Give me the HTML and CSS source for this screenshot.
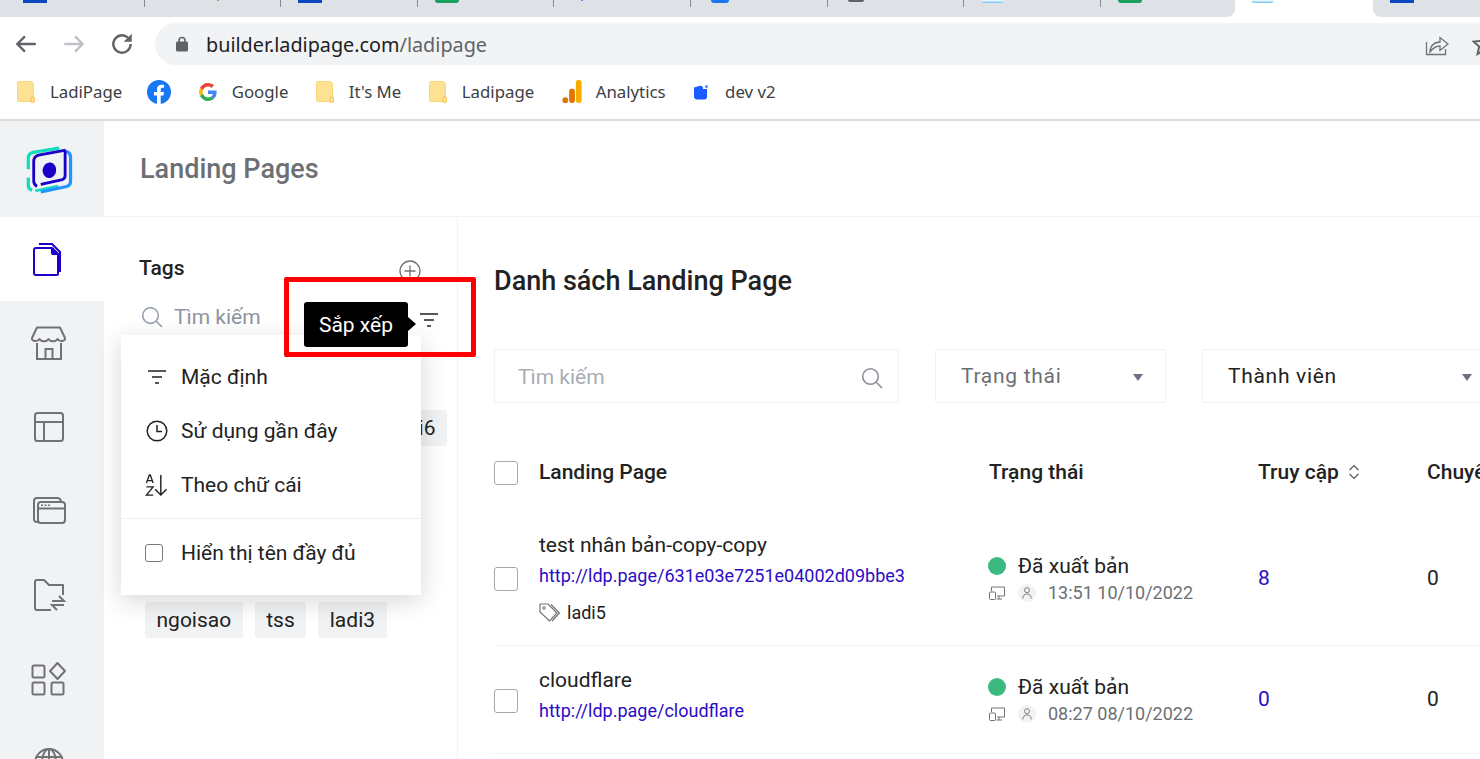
FILE: index.html
```html
<!DOCTYPE html>
<html lang="en">
<head>
    <meta charset="UTF-8">
    <meta name="viewport" content="width=device-width, initial-scale=1.0">
    <title>Landing Pages</title>
    <link rel="stylesheet" href="styles.css">
</head>
<body>
    <!-- Browser tabs, only the bottom of the favicons shows -->
    <div class="tabs">
        <div class="tab-group tab-group-left">
            <div class="tab"><span class="fav fav-blue"></span></div>
            <div class="tab"><span class="fav fav-bits"></span></div>
            <div class="tab"><span class="fav fav-blue"></span></div>
            <div class="tab"><span class="fav fav-green"></span></div>
            <div class="tab"><span class="fav fav-bits2"></span></div>
            <div class="tab"><span class="fav fav-fb"></span></div>
            <div class="tab"><span class="fav fav-grey"></span></div>
            <div class="tab"><span class="fav fav-light"></span></div>
            <div class="tab tab-last"><span class="fav fav-green"></span></div>
        </div>
        <div class="tab-active"><span class="fav fav-light"></span></div>
        <div class="tab-group tab-group-right">
            <div class="tab tab-last"><span class="fav fav-blue"></span></div>
        </div>
    </div>

    <!-- Browser toolbar -->
    <div class="toolbar">
        <svg class="nav-icon" viewBox="0 0 24 24"><path d="M21 12H4M11 5l-7 7 7 7" fill="none" stroke="#5f6368" stroke-width="2.2"/></svg>
        <svg class="nav-icon" viewBox="0 0 24 24"><path d="M3 12h17M13 5l7 7-7 7" fill="none" stroke="#bdc1c6" stroke-width="2.2"/></svg>
        <svg class="nav-icon" viewBox="0 0 24 24"><path d="M20 12a8 8 0 1 1-2.6-5.9" fill="none" stroke="#5f6368" stroke-width="2.2"/><path d="M21 2.5V10h-7.5z" fill="#5f6368"/></svg>
        <div class="omnibox">
            <svg class="lock" viewBox="0 0 12 16"><path d="M3 6V4.500a3 3 0 0 1 6 0V6" fill="none" stroke="#5f6368" stroke-width="1.600"/><rect y="5.500" width="12" height="10" rx="1.500" fill="#5f6368"/></svg>
            <span class="url">builder.ladipage.com<span class="url-path">/ladipage</span></span>
            <svg class="share" viewBox="0 0 24 24"><path d="M1.500 10v12.500h19V17" fill="none" stroke="#6f7276" stroke-width="1.300"/><path d="M5 20c0-6 4-10 10-10V5.500l8 6.500-8 6.500V14c-4 0-7 2-10 6z" fill="none" stroke="#6f7276" stroke-width="1.300"/></svg>
            <svg class="star" viewBox="0 0 24 24"><path d="M12 2l3 7 7.500.6-5.700 5 1.700 7.400L12 18l-6.500 4 1.700-7.400-5.700-5L9 9z" fill="none" stroke="#5f6368" stroke-width="2"/></svg>
        </div>
    </div>

    <!-- Bookmarks -->
    <div class="bookmarks">
        <div class="bookmark bookmark-first">
            <svg class="bm-folder" viewBox="0 0 18 22"><path d="M1.500.5h12a3 3 0 0 1 3 3v17h-15a1 1 0 0 1-1-1v-18a1 1 0 0 1 1-1z" fill="#fde293" stroke="#f8d775"/><rect x="14" y="16" width="3.500" height="5.500" rx="1" fill="#fde293" stroke="#f3c34f"/></svg>
            <span>LadiPage</span>
        </div>
        <div class="bookmark">
            <svg class="bm-icon" viewBox="0 0 24 24"><circle cx="12" cy="12" r="12" fill="#1877f2"/><path d="M10 24v-8.500H7V12h3V9.300C10 6.300 11.800 4.700 14.500 4.700c1.300 0 2.600.2 2.600.2v2.900h-1.500c-1.400 0-1.900.9-1.900 1.800V12h3.300l-.5 3.500h-2.800V24z" fill="#fff"/></svg>
        </div>
        <div class="bookmark">
            <svg class="bm-google" viewBox="0 0 48 48"><path fill="#ea4335" d="M24 9.500c3.500 0 6.700 1.300 9.100 3.500l6.800-6.800C35.800 2.400 30.300 0 24 0 14.600 0 6.500 5.400 2.600 13.200l7.900 6.200C12.400 13.700 17.700 9.500 24 9.500z"/><path fill="#4285f4" d="M47 24.500c0-1.600-.2-3.100-.4-4.500H24v9h12.900c-.6 3-2.300 5.500-4.800 7.200l7.700 6C44.300 38 47 31.800 47 24.500z"/><path fill="#fbbc05" d="M10.500 28.600c-.5-1.400-.8-3-.8-4.600s.3-3.200.8-4.600l-7.900-6.200C.9 16.500 0 20.100 0 24s.9 7.500 2.600 10.800z"/><path fill="#34a853" d="M24 48c6.500 0 11.900-2.100 15.900-5.800l-7.700-6c-2.200 1.400-4.900 2.300-8.200 2.300-6.300 0-11.600-4.200-13.500-10l-7.900 6.200C6.500 42.600 14.600 48 24 48z"/></svg>
            <span>Google</span>
        </div>
        <div class="bookmark">
            <svg class="bm-folder" viewBox="0 0 18 22"><path d="M1.500.5h12a3 3 0 0 1 3 3v17h-15a1 1 0 0 1-1-1v-18a1 1 0 0 1 1-1z" fill="#fde293" stroke="#f8d775"/><rect x="14" y="16" width="3.500" height="5.500" rx="1" fill="#fde293" stroke="#f3c34f"/></svg>
            <span>It's Me</span>
        </div>
        <div class="bookmark">
            <svg class="bm-folder" viewBox="0 0 18 22"><path d="M1.500.5h12a3 3 0 0 1 3 3v17h-15a1 1 0 0 1-1-1v-18a1 1 0 0 1 1-1z" fill="#fde293" stroke="#f8d775"/><rect x="14" y="16" width="3.500" height="5.500" rx="1" fill="#fde293" stroke="#f3c34f"/></svg>
            <span>Ladipage</span>
        </div>
        <div class="bookmark">
            <svg class="bm-analytics" viewBox="0 0 20 24"><rect x="14" y="0" width="6" height="24" rx="2.500" fill="#f9ab00"/><rect x="7" y="9" width="6" height="15" rx="2.500" fill="#e37400"/><circle cx="3" cy="21" r="3" fill="#e37400"/></svg>
            <span>Analytics</span>
        </div>
        <div class="bookmark">
            <svg class="bm-dev" viewBox="0 0 16 16"><path d="M1 3.500 8 1.500l2 2v12H3l-2-2z" fill="#1a5cff"/><path d="M10 5h4v9l-2 1.500h-2z" fill="#1a5cff"/><circle cx="13.500" cy="2.500" r="1.500" fill="#4d8dff"/></svg>
            <span>dev v2</span>
        </div>
    </div>

    <!-- App -->
    <div class="app">
        <div class="sidebar">
            <div class="logo">
                <svg class="logo-img" viewBox="0 0 60 60">
                    <path d="M38 6.500 14 10.500Q9.500 11.500 9.500 16V26M9.500 34V41Q9.500 44 13 45.500" fill="none" stroke="#12dcc0" stroke-width="3"/>
                    <path d="M16 46 37 41.500" fill="none" stroke="#12dcc0" stroke-width="2.500"/>
                    <path d="M44 9.500Q48.500 10.500 48.500 15V37Q48.500 41 45 42L21 47" fill="none" stroke="#2196ff" stroke-width="3"/>
                    <path d="M44 8.500 19 13Q14.500 14 14.500 19V37Q14.500 40 17.500 42M43.500 9V32Q43.500 35 40 36L21 40" fill="none" stroke="#1c00c7" stroke-width="2.600"/>
                    <ellipse cx="29" cy="27" rx="6.300" ry="7.200" transform="rotate(10 29 27)" fill="#1c00c7"/>
                </svg>
            </div>
            <div class="side-item side-item-active">
                <svg class="side-icon" viewBox="0 0 36 36"><path d="M8 3h13l8 8v20" fill="none" stroke="#1c00c7" stroke-width="2"/><path d="M3 9a2 2 0 0 1 2-2h16l6 6v20a1 1 0 0 1-1 1H5a2 2 0 0 1-2-2z" fill="none" stroke="#1c00c7" stroke-width="2"/><path d="M20 7h2l5 5v2h-5a2 2 0 0 1-2-2z" fill="#1c00c7"/></svg>
            </div>
            <div class="side-item">
                <svg class="side-icon" viewBox="0 0 36 36"><path d="M6 2.500h23l5 10.500q.5 2.500-3 3q-3 .3-4.500-2q-1.500 2.300-4.500 2.300t-4.500-2.300q-1.500 2.300-4.500 2.300t-4.500-2.300q-1.500 2.300-4.500 2q-3.500-.5-3-3z" fill="none" stroke="#707274" stroke-width="2" stroke-linejoin="round"/><path d="M6 18v16h24V18M14.500 34V24h7v10" fill="none" stroke="#707274" stroke-width="2"/></svg>
            </div>
            <div class="side-item">
                <svg class="side-icon" viewBox="0 0 36 36"><rect x="4" y="4" width="28" height="28" rx="2.500" fill="none" stroke="#707274" stroke-width="2"/><path d="M4 13h28M13 13v19" fill="none" stroke="#707274" stroke-width="2"/></svg>
            </div>
            <div class="side-item">
                <svg class="side-icon" viewBox="0 0 36 36"><path d="M7 29H6a3 3 0 0 1-3-3V8a3 3 0 0 1 3-3h20a4 4 0 0 1 4 3" fill="none" stroke="#707274" stroke-width="2"/><rect x="7" y="9" width="27" height="21" rx="3" fill="none" stroke="#707274" stroke-width="2"/><path d="M7 15.500h27" stroke="#707274" stroke-width="2"/><path d="M10 12.200h2M13.500 12.200h2M17 12.200h2" stroke="#707274" stroke-width="1.500"/></svg>
            </div>
            <div class="side-item">
                <svg class="side-icon" viewBox="0 0 36 36"><path d="M20 33H6a2 2 0 0 1-2-2V5a2 2 0 0 1 2-2h7l5 5h14v10" fill="none" stroke="#707274" stroke-width="2" stroke-linejoin="round"/><path d="M21 24h12l-5-5M33 28H21l5 5" fill="none" stroke="#707274" stroke-width="2"/></svg>
            </div>
            <div class="side-item">
                <svg class="side-icon side-icon-grid" viewBox="0 0 36 36"><rect x="1.500" y="4.500" width="12" height="12" rx="1.500" fill="none" stroke="#707274" stroke-width="2"/><rect x="1.500" y="21.500" width="12" height="12" rx="1.500" fill="none" stroke="#707274" stroke-width="2"/><rect x="20.500" y="21.500" width="12" height="12" rx="1.500" fill="none" stroke="#707274" stroke-width="2"/><path d="M26.500 2 34 10l-7.500 8-7.500-8z" fill="none" stroke="#707274" stroke-width="2" stroke-linejoin="round"/></svg>
            </div>
            <div class="side-item">
                <svg class="side-icon" viewBox="0 0 36 36"><circle cx="18" cy="18" r="14" fill="none" stroke="#707274" stroke-width="2"/><ellipse cx="18" cy="18" rx="7" ry="14" fill="none" stroke="#707274" stroke-width="2"/><path d="M18 4v28M5 12h26M5 24h26" stroke="#707274" stroke-width="2"/></svg>
            </div>
        </div>

        <div class="content">
            <div class="page-header">Landing Pages</div>
            <div class="content-body">
                <!-- Tags column -->
                <div class="tags-panel">
                    <div class="tags-head">
                        <span class="tags-title">Tags</span>
                        <svg class="tags-add" viewBox="0 0 22 22"><circle cx="11" cy="11" r="10" fill="none" stroke="#6f7276" stroke-width="1.300"/><path d="M11 5.500v11M5.500 11h11" stroke="#6f7276" stroke-width="1.300"/></svg>
                    </div>
                    <div class="tags-search">
                        <svg class="tags-search-icon" viewBox="0 0 22 22"><circle cx="9.500" cy="9.500" r="7.800" fill="none" stroke="#9aa3b2" stroke-width="1.700"/><path d="M15 15l6 6" stroke="#9aa3b2" stroke-width="1.700"/></svg>
                        <span class="tags-search-text">Tìm kiếm</span>
                        <svg class="filter-icon tags-filter" viewBox="0 0 20 14"><path d="M1 1h18M5 7h10M8 13h4" stroke="#222" stroke-width="1.500"/></svg>
                    </div>
                    <!-- the rows in between sit under the open menu -->
                    <div class="tag-row tag-row-top">
                        <span class="tag">ladi6</span>
                    </div>
                    <div class="tag-row tag-row-bottom">
                        <span class="tag">ngoisao</span>
                        <span class="tag">tss</span>
                        <span class="tag">ladi3</span>
                    </div>

                    <div class="sort-menu">
                        <div class="sort-item">
                            <span class="sort-icon"><svg class="filter-icon" viewBox="0 0 20 14"><path d="M1 1h18M5 7h10M8 13h4" stroke="#222" stroke-width="1.500"/></svg></span>
                            Mặc định
                        </div>
                        <div class="sort-item">
                            <span class="sort-icon"><svg class="clock-icon" viewBox="0 0 22 22"><circle cx="11" cy="11" r="9.800" fill="none" stroke="#222" stroke-width="1.500"/><path d="M11 5v6.500h5" fill="none" stroke="#222" stroke-width="1.500"/></svg></span>
                            Sử dụng gần đây
                        </div>
                        <div class="sort-item">
                            <span class="sort-icon"><svg class="az-icon" viewBox="0 0 24 24"><path d="M1.500 10 4.500 1.500h1L8.500 10M2.700 7.500h4.600M1.500 14h7l-7 8.500h7" fill="none" stroke="#222" stroke-width="1.400"/><path d="M16.500 1.500v21M10.500 16.500l6 6 6-6" fill="none" stroke="#222" stroke-width="1.500"/></svg></span>
                            Theo chữ cái
                        </div>
                        <div class="sort-divider"></div>
                        <div class="sort-item">
                            <span class="sort-icon"><span class="sort-check"></span></span>
                            Hiển thị tên đầy đủ
                        </div>
                    </div>

                    <div class="red-box"></div>
                    <div class="tooltip">Sắp xếp</div>
                </div>

                <!-- Main list -->
                <div class="main">
                    <h1 class="main-title">Danh sách Landing Page</h1>
                    <div class="filters">
                        <div class="filter filter-search">
                            <span class="placeholder">Tìm kiếm</span>
                            <svg class="filter-search-icon" viewBox="0 0 22 22"><circle cx="9.500" cy="9.500" r="7.800" fill="none" stroke="#8a8f98" stroke-width="1.600"/><path d="M15 15l6 6" stroke="#8a8f98" stroke-width="1.600"/></svg>
                        </div>
                        <div class="filter filter-status">
                            <span class="select-grey">Trạng thái</span>
                            <span class="caret"></span>
                        </div>
                        <div class="filter filter-member">
                            <span class="select-dark">Thành viên</span>
                            <span class="caret"></span>
                        </div>
                    </div>

                    <div class="row row-head">
                        <span class="check"></span>
                        <span class="head-text">Landing Page</span>
                        <span class="head-text">Trạng thái</span>
                        <span class="head-text head-sort">Truy cập
                            <svg class="sort-arrows" viewBox="0 0 12 16"><path d="M1.500 6 6 1.500 10.500 6M1.500 10 6 14.500 10.500 10" fill="none" stroke="#555" stroke-width="1.200"/></svg>
                        </span>
                        <span class="head-text">Chuyển đổi</span>
                    </div>

                    <div class="row row-page">
                        <span class="check"></span>
                        <div class="page-info">
                            <div class="page-name">test nhân bản-copy-copy</div>
                            <a class="page-url">http://ldp.page/631e03e7251e04002d09bbe3</a>
                            <div class="page-tags">
                                <svg class="tag-icon" viewBox="0 0 22 20"><path d="M1 2a1 1 0 0 1 1-1h7l9 9-7.500 8L1 9z" fill="none" stroke="#707274" stroke-width="1.200"/><path d="M12 1.500l8.500 8.500-7.500 8" fill="none" stroke="#707274" stroke-width="1.200"/><circle cx="5" cy="5" r="1.300" fill="none" stroke="#707274"/></svg>
                                ladi5
                            </div>
                        </div>
                        <div class="status">
                            <div class="status-line"><span class="dot"></span>Đã xuất bản</div>
                            <div class="status-meta">
                                <svg class="device-icon" viewBox="0 0 16 14"><path d="M2.500 5V1h13v9H8M10 10v3M7.500 13H13" fill="none" stroke="#707274"/><rect x=".5" y="6" width="6" height="7.500" rx="1" fill="none" stroke="#707274"/></svg>
                                <span class="avatar"><svg viewBox="0 0 10 12"><circle cx="5" cy="3.200" r="2.500" fill="none" stroke="#707274" stroke-width=".9"/><path d="M.8 11.500C.8 8.500 2.500 7 5 7s4.200 1.500 4.200 4.500" fill="none" stroke="#707274" stroke-width=".9"/></svg></span>
                                13:51 10/10/2022
                            </div>
                        </div>
                        <span class="num-link">8</span>
                        <span>0</span>
                    </div>

                    <div class="row row-page row-page-short">
                        <span class="check"></span>
                        <div class="page-info">
                            <div class="page-name">cloudflare</div>
                            <a class="page-url">http://ldp.page/cloudflare</a>
                        </div>
                        <div class="status">
                            <div class="status-line"><span class="dot"></span>Đã xuất bản</div>
                            <div class="status-meta">
                                <svg class="device-icon" viewBox="0 0 16 14"><path d="M2.500 5V1h13v9H8M10 10v3M7.500 13H13" fill="none" stroke="#707274"/><rect x=".5" y="6" width="6" height="7.500" rx="1" fill="none" stroke="#707274"/></svg>
                                <span class="avatar"><svg viewBox="0 0 10 12"><circle cx="5" cy="3.200" r="2.500" fill="none" stroke="#707274" stroke-width=".9"/><path d="M.8 11.500C.8 8.500 2.500 7 5 7s4.200 1.500 4.200 4.500" fill="none" stroke="#707274" stroke-width=".9"/></svg></span>
                                08:27 08/10/2022
                            </div>
                        </div>
                        <span class="num-link">0</span>
                        <span>0</span>
                    </div>
                </div>
            </div>
        </div>
    </div>
</body>
</html>
```

FILE: styles.css
```css
/* General */
html, body {
    height: 100%;
}
body {
    margin: 0;
    height: 759px;
    overflow: hidden;
    display: flex;
    flex-direction: column;
    font-family: Roboto, sans-serif;
    font-size: 21px;
    color: #222;
    background: #fff;
}
svg {
    display: block;
    flex-shrink: 0;
}

/* Browser tabs */
.tabs {
    display: flex;
    height: 17px;
    flex-shrink: 0;
}
.tab-group {
    display: flex;
    background: #dee1e6;
}
.tab-group-left {
    width: 1235px;
    flex-shrink: 0;
    padding-left: 8px;
    box-sizing: border-box;
    border-bottom-right-radius: 8px;
}
.tab-group-right {
    flex: 1;
    min-width: 0;
    padding-left: 2px;
    border-bottom-left-radius: 8px;
}
.tab {
    width: 136.600px;
    flex-shrink: 0;
    height: 7px;
    box-sizing: border-box;
    padding-left: 17px;
    border-right: 1px solid #85888d;
}
.tab:first-child {
    padding-left: 15px;
}
.tab-group .tab-last {
    padding-left: 17px;
    border-right: none;
}
.tab-group-right .tab-last {
    padding-left: 15px;
}
.tab-active {
    width: 138px;
    flex-shrink: 0;
    box-sizing: border-box;
    padding-left: 16px;
}
.fav {
    display: block;
    width: 24px;
    height: 3px;
}
.fav-blue {
    background: #0b46c1;
}
.fav-green {
    background: #18a15e;
    border-radius: 0 0 3px 3px;
}
.fav-light {
    width: 23px;
    height: 3px;
    background: linear-gradient(#fff, #6cc4ee);
    border-radius: 0 0 8px 8px;
}
.fav-fb {
    width: 18px;
    height: 3px;
    margin-left: 3px;
    background: #1877f2;
    border-radius: 0 0 9px 9px;
}
.fav-grey {
    width: 16px;
    height: 2px;
    margin-left: 3px;
    background: #606368;
    border-radius: 0 0 8px 8px;
}
.fav-bits {
    width: 2px;
    height: 1px;
    margin-left: 55px;
    background: #c98a5a;
}
.fav-bits2 {
    width: 2px;
    height: 1px;
    margin-left: 10px;
    background: #4a90e8;
}

/* Browser toolbar */
.toolbar {
    display: flex;
    align-items: flex-start;
    height: 56px;
    flex-shrink: 0;
    padding-top: 6px;
    padding-left: 13px;
    box-sizing: border-box;
}
.nav-icon {
    width: 26px;
    height: 26px;
    margin-top: 8px;
    margin-right: 22px;
}
.omnibox {
    flex: 1;
    display: flex;
    align-items: center;
    height: 42px;
    margin-left: -2px;
    padding-left: 21px;
    background: #f1f3f4;
    border-radius: 21px 0 0 21px;
}
.lock {
    width: 12px;
    height: 16px;
}
.url {
    margin-left: 18px;
    font-family: "Noto Sans", sans-serif;
    font-size: 19.800px;
    color: #202124;
}
.url-path {
    color: #5f6368;
}
.share {
    width: 24px;
    height: 24px;
    margin-left: auto;
}
.star {
    width: 24px;
    height: 24px;
    margin-left: 23px;
    margin-right: -16px;
}

/* Bookmarks */
.bookmarks {
    display: flex;
    align-items: center;
    gap: 27.500px;
    height: 48px;
    flex-shrink: 0;
    padding-left: 17px;
    padding-bottom: 9px;
    box-sizing: border-box;
    border-bottom: 2px solid #dcdcdc;
    font-family: "Noto Sans", sans-serif;
    font-size: 16.800px;
    color: #3c4043;
}
.bookmark {
    display: flex;
    align-items: center;
}
.bookmark-first {
    margin-right: -2.500px;
}
.bm-folder {
    width: 18px;
    height: 22px;
    margin-right: 15px;
}
.bm-icon {
    width: 24px;
    height: 24px;
}
.bm-google {
    width: 18px;
    height: 18px;
    margin-right: 15px;
}
.bm-analytics {
    width: 20px;
    height: 23px;
    margin-right: 14px;
}
.bm-dev {
    width: 16px;
    height: 16px;
    margin-right: 16px;
}

/* App shell */
.app {
    display: flex;
    flex: 1;
    min-height: 0;
    overflow: hidden;
}
.sidebar {
    width: 104px;
    flex-shrink: 0;
    background: #f1f2f4;
}
.logo {
    display: flex;
    height: 96px;
    padding: 20px 0 0 18px;
    box-sizing: border-box;
}
.logo-img {
    width: 65px;
    height: 65px;
}
.side-item {
    display: flex;
    align-items: center;
    justify-content: center;
    height: 84px;
    padding-right: 6px;
    box-sizing: border-box;
}
.side-item-active {
    background: #fff;
}
.side-icon {
    width: 36px;
    height: 36px;
}
.content {
    flex: 1;
    min-width: 0;
    display: flex;
    flex-direction: column;
}
.page-header {
    display: flex;
    align-items: center;
    height: 96px;
    flex-shrink: 0;
    padding-left: 36px;
    padding-top: 1px;
    box-sizing: border-box;
    border-bottom: 1px solid #f1f2f4;
    font-size: 27px;
    font-weight: 500;
    color: #6c7075;
}
.content-body {
    display: flex;
    flex: 1;
    min-height: 0;
}

/* Tags column */
.tags-panel {
    position: relative;
    width: 354px;
    flex-shrink: 0;
    box-sizing: border-box;
    border-right: 1px solid #f1f2f4;
}
.tags-head {
    display: flex;
    align-items: center;
    justify-content: space-between;
    width: 282px;
    margin-left: 35px;
    padding-top: 38px;
}
.tags-title {
    font-weight: 500;
    line-height: 24px;
}
.tags-add {
    width: 22px;
    height: 22px;
    margin-top: 5px;
    margin-bottom: -1px;
}
.tags-search {
    display: flex;
    align-items: center;
    width: 298px;
    margin-left: 37px;
    margin-top: 20px;
    height: 32px;
}
.tags-search-icon {
    width: 22px;
    height: 22px;
}
.tags-search-text {
    margin-left: 11px;
    font-size: 21px;
    color: #8d939c;
}
.filter-icon {
    width: 20px;
    height: 14px;
}
.tags-filter {
    margin-left: auto;
    margin-top: 5px;
}
.tag-row {
    display: flex;
    gap: 12px;
    margin-left: 41px;
    width: 302px;
}
.tag-row-top {
    justify-content: flex-end;
    margin-top: 77px;
}
.tag-row-bottom {
    margin-top: 156px;
}
.tag {
    height: 36px;
    padding: 0 11.500px;
    line-height: 36px;
    background: #f1f2f4;
    border-radius: 3px;
}

/* Sort menu, tooltip and the red mark lie over the tags */
.sort-menu {
    position: absolute;
    top: 118px;
    left: 17px;
    width: 300px;
    padding: 15px 0;
    background: #fff;
    box-shadow: 0 6px 24px rgba(0, 0, 0, 0.16);
}
.sort-item {
    display: flex;
    align-items: center;
    height: 54px;
    padding-left: 24px;
}
.sort-icon {
    display: flex;
    align-items: center;
    width: 36px;
    height: 24px;
}
.sort-icon .filter-icon {
    margin-left: 2px;
}
.clock-icon {
    width: 22px;
    height: 22px;
    margin-left: 1px;
}
.az-icon {
    width: 23px;
    height: 24px;
}
.sort-check {
    width: 16px;
    height: 16px;
    border: 1px solid #77797c;
    border-radius: 3px;
}
.sort-divider {
    height: 1px;
    margin: 6px 0 7px;
    background: #eef0f2;
}
.red-box {
    position: absolute;
    top: 60px;
    left: 180px;
    width: 192px;
    height: 80px;
    box-sizing: border-box;
    border: 5px solid #ff0000;
    border-radius: 2px;
}
.tooltip {
    position: absolute;
    top: 85px;
    left: 200px;
    width: 104px;
    height: 45px;
    line-height: 47px;
    text-align: center;
    background: #000;
    color: #fff;
    border-radius: 3px;
}
.tooltip::after {
    content: "";
    position: absolute;
    top: 15px;
    left: 104px;
    border-top: 7px solid transparent;
    border-bottom: 7px solid transparent;
    border-left: 8px solid #000;
}

/* Main list */
.main {
    flex: 1;
    min-width: 0;
    padding: 44px 0 0 36px;
    overflow: hidden;
}
.main-title {
    margin: 0 0 48px;
    font-size: 27px;
    font-weight: 500;
    line-height: 40px;
    color: #222;
    white-space: nowrap;
}
.filters {
    display: flex;
    gap: 36px;
}
.filter {
    display: flex;
    align-items: center;
    flex-shrink: 0;
    height: 54px;
    box-sizing: border-box;
    border: 1px solid #f1f2f4;
    border-radius: 2px;
    padding: 0 15px 0 23px;
}
.filter-search {
    width: 405px;
}
.filter-status {
    width: 231px;
    padding-left: 25px;
    padding-right: 22px;
}
.filter-member {
    width: 290px;
    padding-left: 25px;
    padding-right: 19px;
}
.placeholder {
    padding-top: 2px;
    color: #a8adb4;
}
.filter-search-icon {
    width: 22px;
    height: 22px;
    margin-left: auto;
    margin-top: 3px;
}
.select-grey, .select-dark {
    letter-spacing: 0.700px;
}
.select-grey {
    color: #6c7075;
}
.caret {
    margin-left: auto;
    margin-top: 3px;
    border-left: 5px solid transparent;
    border-right: 5px solid transparent;
    border-top: 7px solid #6c7080;
}
.row {
    display: grid;
    grid-template-columns: 45px 450px 269px 169px 200px;
    align-items: center;
    box-sizing: border-box;
}
.row-head {
    height: 72px;
    margin-top: 34px;
    font-weight: 500;
    white-space: nowrap;
}
.head-text {
    margin-bottom: 2px;
}
.head-sort {
    display: flex;
    align-items: center;
    gap: 9px;
}
.sort-arrows {
    width: 12px;
    height: 16px;
}
.check {
    width: 24px;
    height: 24px;
    box-sizing: border-box;
    border: 1px solid #a8a8a8;
    border-radius: 3px;
}
.row-page {
    padding: 19px 0 17px;
    border-bottom: 1px solid #f1f2f4;
}
.row-page .check {
    margin-top: 2px;
}
.row-page .page-info {
    padding-top: 2px;
}
.row-page-short {
    padding: 19px 0 21px;
}
.row-page-short .check {
    margin-top: 4px;
}
.row-page-short .page-info {
    padding-top: 0;
    padding-bottom: 6px;
}
.page-name {
    line-height: 30px;
}
.page-url {
    display: block;
    margin-top: 1px;
    font-size: 18px;
    line-height: 30px;
    color: #2b0cc4;
}
.page-tags {
    display: flex;
    align-items: center;
    gap: 6px;
    margin-top: 7px;
    font-size: 18px;
    line-height: 30px;
}
.tag-icon {
    width: 22px;
    height: 20px;
}
.status-line {
    display: flex;
    align-items: center;
    line-height: 30px;
    gap: 12px;
}
.dot {
    width: 18px;
    height: 18px;
    border-radius: 50%;
    background: #3cb97f;
    margin-left: -1px;
}
.status-meta {
    display: flex;
    align-items: center;
    line-height: 24px;
    font-size: 18px;
    color: #6c7075;
}
.device-icon {
    width: 16px;
    height: 14px;
    margin-right: 13px;
}
.avatar {
    display: flex;
    align-items: center;
    justify-content: center;
    width: 18px;
    height: 18px;
    margin-right: 12px;
    border-radius: 50%;
    background: #f1f2f4;
}
.avatar svg {
    width: 10px;
    height: 12px;
}
.num-link {
    color: #2b0cc4;
}
```
